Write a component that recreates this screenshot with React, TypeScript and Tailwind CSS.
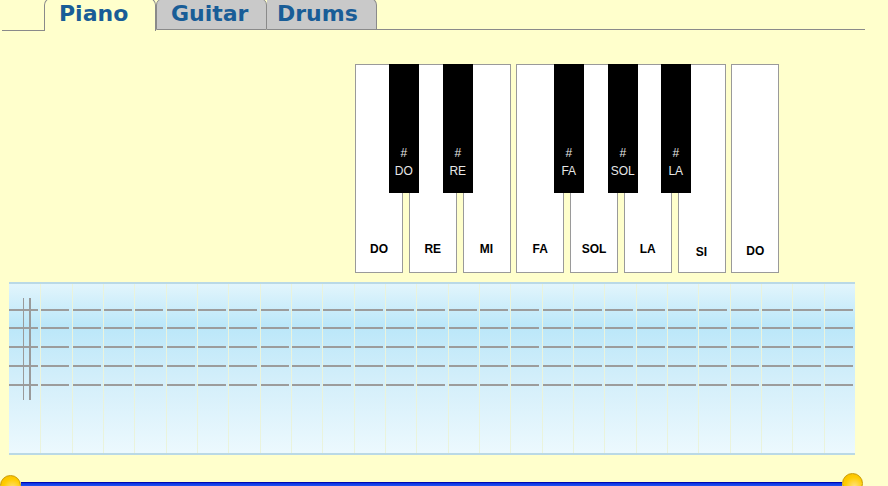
import React from "react";

const whiteKeys = [
  { label: "DO", pb: "pb-[15px]" },
  { label: "RE", pb: "pb-[15px]" },
  { label: "MI", pb: "pb-[15px]" },
  { label: "FA", pb: "pb-[15px]" },
  { label: "SOL", pb: "pb-[15px]" },
  { label: "LA", pb: "pb-[15px]" },
  { label: "SI", pb: "pb-[12px]" },
  { label: "DO", pb: "pb-[13px]" },
];

const blackKeys = [
  { label: "DO", pos: "left-[34px]" },
  { label: "RE", pos: "left-[88px]" },
  { label: "FA", pos: "left-[199px]" },
  { label: "SOL", pos: "left-[253px]" },
  { label: "LA", pos: "left-[306px]" },
];

const columns = Array.from({ length: 27 }, (_, i) => i);

export default function App() {
  return (
    <div className="w-[888px] h-[486px] bg-[#ffffcc] overflow-hidden flex flex-col">
      {/* Tabs */}
      <div className="shrink-0 -mt-[2px] h-[33px] flex pl-[2px] font-['DejaVu_Sans',sans-serif] font-bold text-[22px] leading-[22px] text-[#195d97]">
        <div className="w-[42px] self-end border-b-[1.5px] border-[#8a8a8a]" />
        <div className="w-[112px] h-full border-l-[1.5px] border-r-[1.5px] border-t-[1.5px] border-[#8a8a8a] rounded-t-[7px] flex pl-[14px] pt-[4px]">
          Piano
        </div>
        <div className="w-[111px] h-[31.5px] bg-[#c9c9c9] border-[1.5px] border-[#8a8a8a] rounded-t-[7px] flex pl-[14px] pt-[4px]">
          Guitar
        </div>
        <div className="w-[110px] h-[31.5px] bg-[#c9c9c9] border-[1.5px] border-l-0 border-[#8a8a8a] rounded-tr-[7px] flex pl-[10px] pt-[4px]">
          Drums
        </div>
        <div className="w-[488px] h-[31.5px] border-b-[1.5px] border-[#8a8a8a]" />
      </div>

      {/* Keyboard */}
      <div className="shrink-0 mt-[33px] ml-[355px] relative flex gap-[5.75px] h-[209px] font-['Liberation_Sans',Arial,sans-serif]">
        {whiteKeys.map((k, i) => (
          <div
            key={i}
            className={`w-[48px] h-full bg-white border border-[#9a9a9a] flex flex-col justify-end items-center ${k.pb} text-[12px] leading-[16px] font-bold text-black`}
          >
            {k.label}
          </div>
        ))}
        {blackKeys.map((k, i) => (
          <div
            key={i}
            className={`absolute top-0 ${k.pos} w-[29.5px] h-[129px] bg-black flex flex-col justify-end items-center pb-[13px] text-[12px] leading-[18px] text-[#e6e6e6]`}
          >
            <span>#</span>
            <span>{k.label}</span>
          </div>
        ))}
      </div>

      {/* Staff */}
      <div className="shrink-0 mt-[9px] ml-[9px] w-[846px] h-[173px] relative border-t-2 border-b-2 border-[#bad9e6] bg-[linear-gradient(to_bottom,#e2f5fc_0%,#bbe7f9_25%,#d2eefa_55%,#ecf9fe_100%)] grid grid-cols-[repeat(27,minmax(0,1fr))]">
        {columns.map((c) => (
          <div
            key={c}
            className={`h-full flex flex-col pt-[24.5px] gap-[16.75px] pr-[2.5px] ${c === 0 ? "" : "border-l border-[#eaf3dc]"}`}
          >
            <div className="h-[2px] bg-[#9c9c9c]" />
            <div className="h-[2px] bg-[#9c9c9c]" />
            <div className="h-[2px] bg-[#9c9c9c]" />
            <div className="h-[2px] bg-[#9c9c9c]" />
            <div className="h-[2px] bg-[#9c9c9c]" />
          </div>
        ))}
        <div className="absolute left-[13.5px] top-[13.5px] w-[1.5px] h-[102px] bg-[#9a9a9a]" />
        <div className="absolute left-[20px] top-[13.5px] w-[1.5px] h-[102px] bg-[#9a9a9a]" />
      </div>

      {/* Bottom slider */}
      <div className="shrink-0 mt-[17px] flex items-start w-[863px] h-[30px]">
        <div className="mt-[2.5px] w-[21px] h-[21px] shrink-0 rounded-full border border-[#c99a00] bg-[radial-gradient(circle_at_60%_65%,#ffe27a_0%,#ffcc00_55%,#f5b800_100%)]" />
        <div className="mt-[9.7px] flex-1 h-[10px] border-t-[1.5px] border-[#0008b0] bg-[linear-gradient(to_bottom,#0c2ee0_0%,#2f72ff_60%,#1e5af0_100%)]" />
        <div className="mt-[0.5px] w-[21px] h-[21px] shrink-0 rounded-full border border-[#c99a00] bg-[radial-gradient(circle_at_60%_65%,#ffe27a_0%,#ffcc00_55%,#f5b800_100%)]" />
      </div>
    </div>
  );
}
